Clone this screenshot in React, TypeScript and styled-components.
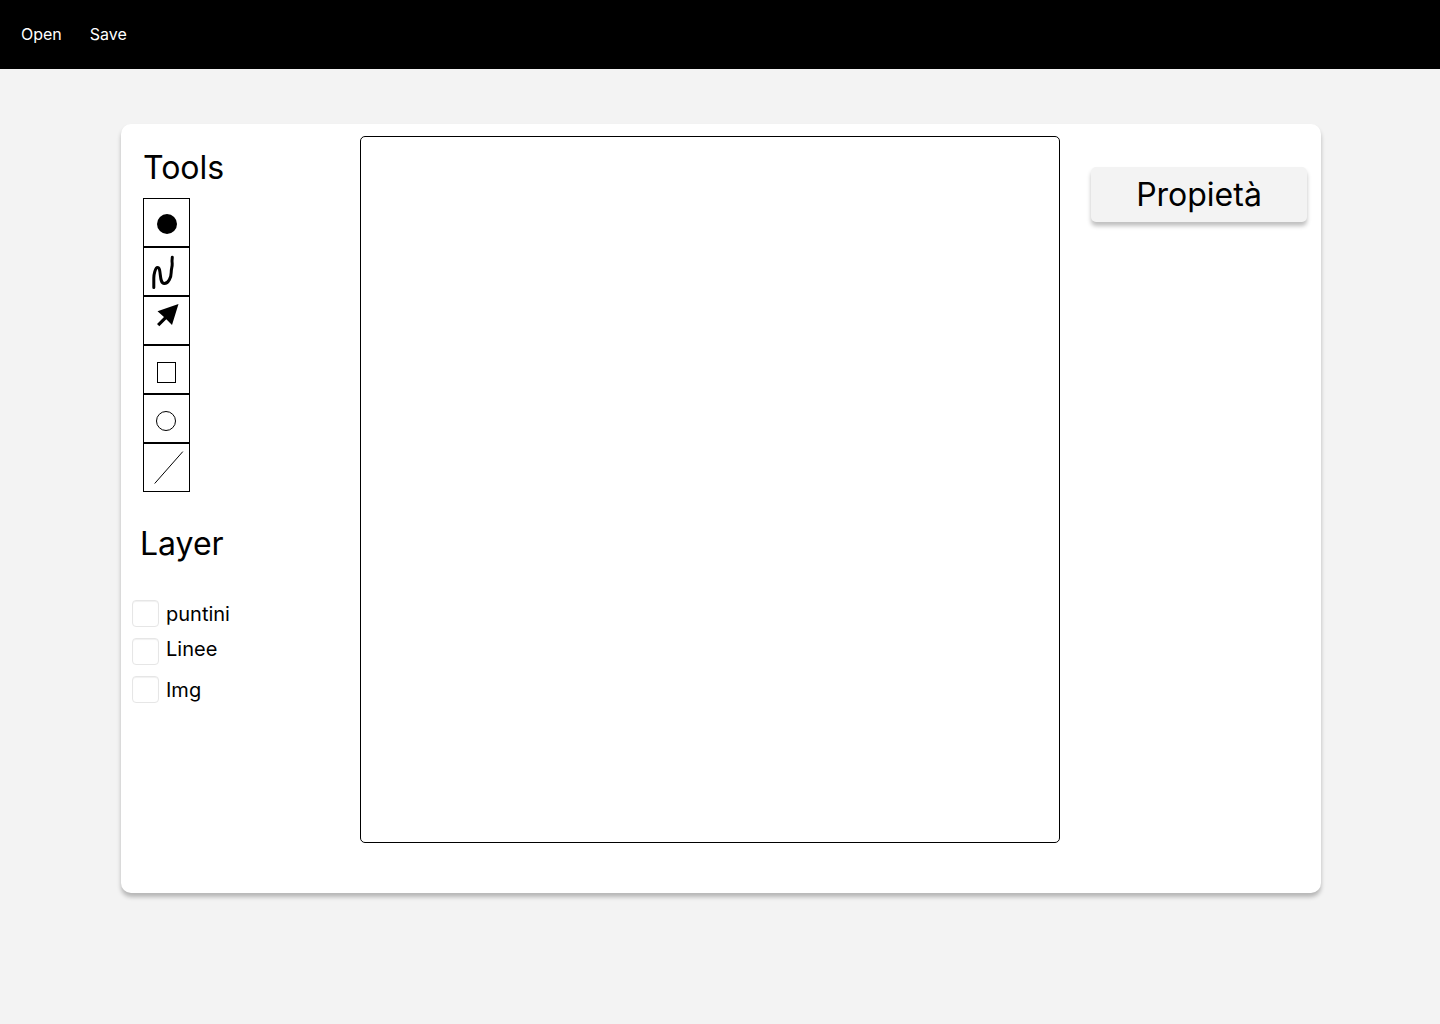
import React from "react";
import styled, { createGlobalStyle } from "styled-components";

const GlobalStyle = createGlobalStyle`
  *, *::before, *::after { box-sizing: border-box; }
  body {
    margin: 0;
    background: #f3f3f3;
    color: #000;
    font-family: Inter, "Liberation Sans", sans-serif;
  }
`;

const TopBar = styled.nav`
  display: flex;
  align-items: center;
  gap: 28px;
  height: 69px;
  padding: 0 21px 2px;
  background: #000;
`;

const MenuButton = styled.button`
  padding: 0;
  border: 0;
  background: none;
  color: #fff;
  font: 400 16px/20px Inter, "Liberation Sans", sans-serif;
  cursor: pointer;
`;

const Page = styled.main`
  padding: 55px 119px 64px 121px;
`;

const Workspace = styled.div`
  display: grid;
  grid-template-columns: 228px minmax(0, 1fr) 216px;
  padding: 12px 14px 50px 11px;
  border-radius: 10px;
  background: #fff;
  box-shadow: 0 4px 4px rgba(0, 0, 0, 0.25);
`;

const Sidebar = styled.aside`
  display: flex;
  flex-direction: column;
  align-items: flex-start;
  padding-top: 12px;
`;

const Heading = styled.h2`
  margin: 0;
  font-size: 32px;
  line-height: 40px;
  font-weight: 400;
`;

const ToolSection = styled.section`
  padding-left: 11px;
`;

const ToolList = styled.div`
  display: flex;
  flex-direction: column;
  width: 47px;
  margin-top: 10px;
`;

const ToolButton = styled.button`
  display: block;
  height: 49px;
  padding: 0;
  border: 1px solid #000;
  background: #fff;
  color: #000;
  cursor: pointer;

  svg {
    display: block;
    width: 45px;
    height: 47px;
  }
`;

const LayerSection = styled.section`
  margin-top: 32px;

  ${Heading} {
    padding-left: 8px;
  }
`;

const LayerList = styled.div`
  display: flex;
  flex-direction: column;
  gap: 11px;
  margin-top: 36px;
`;

const LayerRow = styled.label<{ $align: "center" | "flex-start" }>`
  display: flex;
  align-items: ${(p) => p.$align};
  gap: 7px;
  font-size: 20px;
  line-height: 22px;
`;

const LayerCheck = styled.input`
  appearance: none;
  flex: none;
  width: 27px;
  height: 27px;
  margin: 0;
  border: 1px solid #e6e6e6;
  border-radius: 4px;
  background: #fff;
  box-shadow: inset 0 1px 1px rgba(0, 0, 0, 0.06);

  &:checked {
    background: #000;
  }
`;

const Canvas = styled.section`
  min-height: 707px;
  margin-right: 31px;
  border: 1px solid #000;
  border-radius: 5px;
  background: #fff;
`;

const Properties = styled.aside`
  padding-top: 31px;
`;

const PropertiesButton = styled.button`
  width: 100%;
  height: 55px;
  padding: 0;
  border: 0;
  border-radius: 5px;
  background: #f3f3f3;
  color: #000;
  font: 400 32px/40px Inter, "Liberation Sans", sans-serif;
  box-shadow: 0 4px 4px rgba(0, 0, 0, 0.25);
  cursor: pointer;
`;

const tools = [
  { name: "Punto", icon: <circle cx="23" cy="25" r="10" fill="currentColor" /> },
  {
    name: "Mano libera",
    icon: (
      <path
        d="M9.8 39.5V30C9.8 27 11.2 19.6 13.5 19.6C17.8 19.6 14.6 35.5 20.3 35.5C24.5 35.5 27.2 29 27.2 24.5C27.2 20 28.4 19 28.2 15.5C27.8 13 28 11.5 28.3 9.2"
        fill="none"
        stroke="currentColor"
        strokeWidth="3"
        strokeLinecap="round"
        strokeLinejoin="round"
      />
    ),
  },
  {
    name: "Seleziona",
    icon: (
      <path
        d="M34.5 7L28 28L22.3 22.3L15.3 29.3L13 27L20 20L13.5 14.2Z"
        fill="currentColor"
      />
    ),
  },
  {
    name: "Rettangolo",
    icon: <rect x="13.5" y="16.5" width="18" height="20" fill="none" stroke="currentColor" />,
  },
  {
    name: "Cerchio",
    icon: <circle cx="22" cy="26" r="9.5" fill="none" stroke="currentColor" />,
  },
  {
    name: "Linea",
    icon: <path d="M10.7 39.5L38.8 7.6" fill="none" stroke="currentColor" />,
  },
];

const layers: { name: string; align: "center" | "flex-start" }[] = [
  { name: "puntini", align: "center" },
  { name: "Linee", align: "flex-start" },
  { name: "Img", align: "center" },
];

export default function App() {
  return (
    <>
      <GlobalStyle />
      <TopBar>
        <MenuButton type="button">Open</MenuButton>
        <MenuButton type="button">Save</MenuButton>
      </TopBar>
      <Page>
        <Workspace>
          <Sidebar>
            <ToolSection>
              <Heading>Tools</Heading>
              <ToolList>
                {tools.map((tool) => (
                  <ToolButton key={tool.name} type="button" aria-label={tool.name}>
                    <svg viewBox="0 0 45 47" aria-hidden="true">
                      {tool.icon}
                    </svg>
                  </ToolButton>
                ))}
              </ToolList>
            </ToolSection>
            <LayerSection>
              <Heading>Layer</Heading>
              <LayerList>
                {layers.map((layer) => (
                  <LayerRow key={layer.name} $align={layer.align}>
                    <LayerCheck type="checkbox" />
                    {layer.name}
                  </LayerRow>
                ))}
              </LayerList>
            </LayerSection>
          </Sidebar>
          <Canvas />
          <Properties>
            <PropertiesButton type="button">Propietà</PropertiesButton>
          </Properties>
        </Workspace>
      </Page>
    </>
  );
}
